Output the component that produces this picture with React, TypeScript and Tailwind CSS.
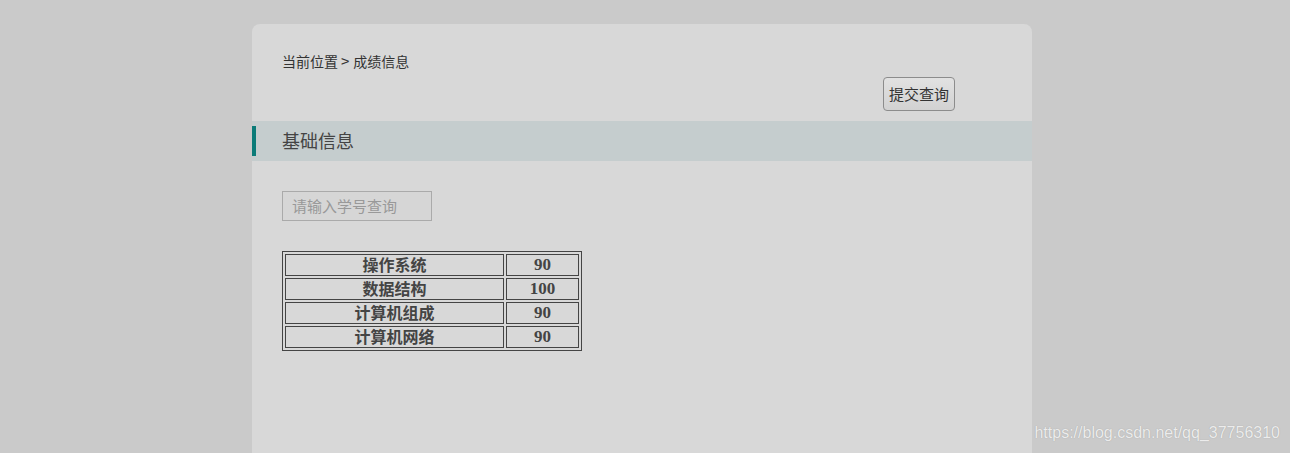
import React from "react";

const scores = [
    { course: "操作系统", score: "90" },
    { course: "数据结构", score: "100" },
    { course: "计算机组成", score: "90" },
    { course: "计算机网络", score: "90" },
];

const cjk = "font-['Microsoft_YaHei','Noto_Sans_CJK_SC',sans-serif]";

const App = () => {
    return (
        <div className={`relative min-h-[453px] h-[453px] overflow-hidden bg-[#cacaca] ${cjk}`}>
            <div className="ml-[252px] w-[780px] h-[460px] mt-[24px] rounded-t-[8px] bg-[#d8d8d8] pt-[29px]">
                {/* 当前位置 */}
                <div className="pl-[30px] text-[14px] leading-[16px] text-[#333]">
                    当前位置<span className="pl-[3px] pr-[4px] text-[15px]">&gt;</span>成绩信息
                </div>
                <div className="flex justify-end pr-[77px] mt-[8px]">
                    <button
                        type="button"
                        className="w-[72px] h-[34px] rounded-[4px] border border-[#8c8c8c] bg-gradient-to-b from-[#e2e2e2] to-[#d2d2d2] pb-[2px] text-[15px] text-[#333] leading-none"
                    >
                        提交查询
                    </button>
                </div>

                {/* 基础信息 */}
                <div className="mt-[10px] h-[40px] bg-[#c5cdce] flex items-center">
                    <div className="w-[4px] h-[30px] bg-[#0b7b78]" />
                    <span className="ml-[26px] pb-[2px] text-[18px] text-[#444]">基础信息</span>
                </div>

                <div className="pl-[30px] pt-[30px]">
                    <input
                        type="text"
                        placeholder="请输入学号查询"
                        className="block w-[150px] h-[30px] border border-[#aaa] bg-[#d6d6d6] pl-[9px] pb-[1px] text-[15px] text-[#333] placeholder:text-[#999] outline-none"
                    />

                    <table className="mt-[30px] w-[300px] border-separate border-spacing-[2px] border border-[#444] font-bold text-[16px] text-[#444]">
                        <tbody>
                            {scores.map((row) => (
                                <tr key={row.course}>
                                    <td className="w-[219px] h-[22px] p-0 pb-[2px] border border-[#444] text-center leading-[18px]">
                                        {row.course}
                                    </td>
                                    <td className="h-[22px] p-0 pb-[1px] border border-[#444] text-center leading-[19px] font-['Liberation_Serif',serif] text-[17px]">
                                        {row.score}
                                    </td>
                                </tr>
                            ))}
                        </tbody>
                    </table>
                </div>
            </div>

            <div className="absolute right-[10px] top-[423px] font-['Liberation_Sans',Arial,sans-serif] text-[16px] leading-[20px] text-[#ececec] [text-shadow:0_0_1px_#9a9a9a]">
                https://blog.csdn.net/qq_37756310
            </div>
        </div>
    );
};

export default App;
